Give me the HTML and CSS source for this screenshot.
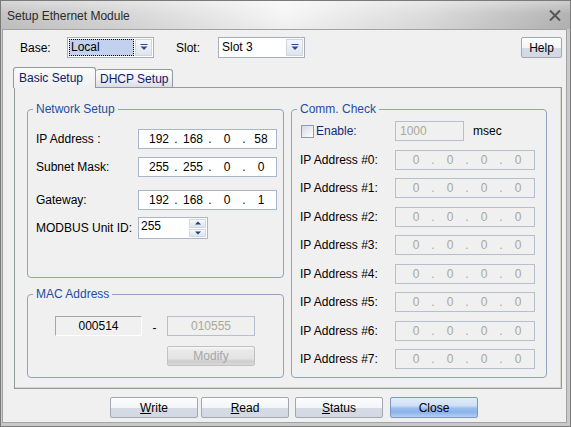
FILE: index.html
```html
<!DOCTYPE html>
<html>
<head>
<meta charset="utf-8">
<title>Setup Ethernet Module</title>
<link rel="stylesheet" href="styles.css">
</head>
<body>
<div class="window">
  <div class="titlebar">
    <span class="title">Setup Ethernet Module</span>
    <svg class="close" width="12" height="11" viewBox="0 0 12 11"><path d="M1 0.5 L11 10.5 M11 0.5 L1 10.5" stroke="#555" stroke-width="2" fill="none"/></svg>
  </div>
  <div class="client">
    <div class="toprow">
      <span class="lbl lbl-base">Base:</span>
      <div class="combo">
        <span class="combo-val sel">Local</span>
        <span class="drop"><svg width="8" height="7" viewBox="0 0 8 7"><rect x="0.5" y="0" width="7" height="1" fill="#2f4c8a"/><path d="M0.5 2.5 H7.5 L4 6 Z" fill="#2f4c8a"/></svg></span>
      </div>
      <span class="lbl lbl-slot">Slot:</span>
      <div class="combo">
        <span class="combo-val">Slot 3</span>
        <span class="drop"><svg width="8" height="7" viewBox="0 0 8 7"><rect x="0.5" y="0" width="7" height="1" fill="#2f4c8a"/><path d="M0.5 2.5 H7.5 L4 6 Z" fill="#2f4c8a"/></svg></span>
      </div>
      <button class="btn help">Help</button>
    </div>

    <div class="tabs">
      <div class="tab active">Basic Setup</div>
      <div class="tab inactive">DHCP Setup</div>
    </div>

    <div class="panel">
      <div class="col-left">
        <fieldset class="group net">
          <legend>Network Setup</legend>
          <div class="net-body">
            <div class="row"><span class="flabel">IP Address :</span>
              <div class="ipbox"><span class="seg">192</span><span class="dot">.</span><span class="seg">168</span><span class="dot">.</span><span class="seg">0</span><span class="dot">.</span><span class="seg">58</span></div>
            </div>
            <div class="row r-subnet"><span class="flabel">Subnet Mask:</span>
              <div class="ipbox"><span class="seg">255</span><span class="dot">.</span><span class="seg">255</span><span class="dot">.</span><span class="seg">0</span><span class="dot">.</span><span class="seg">0</span></div>
            </div>
            <div class="row r-gw"><span class="flabel">Gateway:</span>
              <div class="ipbox"><span class="seg">192</span><span class="dot">.</span><span class="seg">168</span><span class="dot">.</span><span class="seg">0</span><span class="dot">.</span><span class="seg">1</span></div>
            </div>
            <div class="row r-modbus"><span class="flabel">MODBUS Unit ID:</span>
              <div class="spin">
                <span class="spin-val">255</span>
                <span class="spin-btns">
                  <span class="spin-btn"><svg width="6" height="4" viewBox="0 0 6 4"><path d="M0 3.5 H6 L3 0.5 Z" fill="#1f3b7a"/></svg></span>
                  <span class="spin-btn"><svg width="6" height="4" viewBox="0 0 6 4"><path d="M0 0.5 H6 L3 3.5 Z" fill="#1f3b7a"/></svg></span>
                </span>
              </div>
            </div>
          </div>
        </fieldset>

        <fieldset class="group mac">
          <legend>MAC Address</legend>
          <div class="mac-grid">
            <div class="sunken">000514</div>
            <div class="dash">-</div>
            <div class="disbox">010555</div>
            <button class="modify" disabled>Modify</button>
          </div>
        </fieldset>
      </div>

      <fieldset class="group comm">
        <legend>Comm. Check</legend>
        <div class="comm-body">
          <div class="enable-row">
            <span class="chk-label"><span class="chk"></span><span class="enable">Enable:</span></span>
            <div class="in-1000">1000</div>
            <span class="msec">msec</span>
          </div>
          <div class="crow first"><span class="clabel">IP Address #0:</span><div class="ipbox dis"><span class="seg">0</span><span class="dot">.</span><span class="seg">0</span><span class="dot">.</span><span class="seg">0</span><span class="dot">.</span><span class="seg">0</span></div></div>
          <div class="crow"><span class="clabel">IP Address #1:</span><div class="ipbox dis"><span class="seg">0</span><span class="dot">.</span><span class="seg">0</span><span class="dot">.</span><span class="seg">0</span><span class="dot">.</span><span class="seg">0</span></div></div>
          <div class="crow"><span class="clabel">IP Address #2:</span><div class="ipbox dis"><span class="seg">0</span><span class="dot">.</span><span class="seg">0</span><span class="dot">.</span><span class="seg">0</span><span class="dot">.</span><span class="seg">0</span></div></div>
          <div class="crow"><span class="clabel">IP Address #3:</span><div class="ipbox dis"><span class="seg">0</span><span class="dot">.</span><span class="seg">0</span><span class="dot">.</span><span class="seg">0</span><span class="dot">.</span><span class="seg">0</span></div></div>
          <div class="crow"><span class="clabel">IP Address #4:</span><div class="ipbox dis"><span class="seg">0</span><span class="dot">.</span><span class="seg">0</span><span class="dot">.</span><span class="seg">0</span><span class="dot">.</span><span class="seg">0</span></div></div>
          <div class="crow"><span class="clabel">IP Address #5:</span><div class="ipbox dis"><span class="seg">0</span><span class="dot">.</span><span class="seg">0</span><span class="dot">.</span><span class="seg">0</span><span class="dot">.</span><span class="seg">0</span></div></div>
          <div class="crow"><span class="clabel">IP Address #6:</span><div class="ipbox dis"><span class="seg">0</span><span class="dot">.</span><span class="seg">0</span><span class="dot">.</span><span class="seg">0</span><span class="dot">.</span><span class="seg">0</span></div></div>
          <div class="crow"><span class="clabel">IP Address #7:</span><div class="ipbox dis"><span class="seg">0</span><span class="dot">.</span><span class="seg">0</span><span class="dot">.</span><span class="seg">0</span><span class="dot">.</span><span class="seg">0</span></div></div>
        </div>
      </fieldset>
    </div>

    <div class="buttons">
      <button class="btn b-write"><u>W</u>rite</button>
      <button class="btn b-read"><u>R</u>ead</button>
      <button class="btn b-status"><u>S</u>tatus</button>
      <button class="btn b-close">Close</button>
    </div>
  </div>
</div>
</body>
</html>
```

FILE: styles.css
```css
* { box-sizing: border-box; }
html, body { margin: 0; padding: 0; }
body {
  font-family: "Liberation Sans", Arial, sans-serif;
  font-size: 12px;
  color: #000;
  background: #ffffff;
}

.window {
  width: 571px;
  height: 427px;
  border: 1px solid #7a7a7a;
  background: #c9c9c9;
  display: flex;
  flex-direction: column;
}

.titlebar {
  height: 28px;
  flex: none;
  display: flex;
  align-items: center;
  justify-content: space-between;
  padding: 1px 9px 0 6px;
  background:
    linear-gradient(180deg, rgba(255,255,255,0.35) 0%, rgba(255,255,255,0) 45%, rgba(0,0,0,0.03) 100%),
    linear-gradient(90deg, #c3c3c3 0%, #dadada 25%, #f6f6f6 50%, #dcdcdc 75%, #b4b4b4 100%);
}
.title { color: #2a2a2a; font-size: 12px; }
.close { display: block; }

.client {
  flex: 1;
  margin: 0 3px 3px 1px;
  border: 1px solid #a3a3a3;
  background: #f0f0f0;
  display: flex;
  flex-direction: column;
}

/* top row */
.toprow {
  height: 28px;
  padding: 7px 4px 0 17px;
  display: flex;
  align-items: center;
}
.lbl { flex: none; }
.lbl-base { width: 47px; }
.lbl-slot { width: 42px; margin-left: 22px; }

.combo {
  width: 87px;
  height: 21px;
  flex: none;
  border: 1px solid #a7afbb;
  background: #fff;
  display: flex;
  padding: 1px;
}
.combo-val {
  flex: 1;
  padding: 0 2px;
  line-height: 17px;
}
.combo-val.sel {
  background: #c2d2ee;
  outline: 1px dotted #000;
  outline-offset: -1px;
  margin-right: 1px;
}
.drop {
  width: 17px;
  flex: none;
  display: flex;
  align-items: center;
  justify-content: center;
  background: linear-gradient(#f5f7fa, #dfe5ee);
  border: 1px solid #cfd6e0;
}

.btn {
  font-family: inherit;
  font-size: 12px;
  color: #000;
  height: 21px;
  padding: 0;
  border: 1px solid #a3a7ae;
  border-radius: 2px;
  background: linear-gradient(180deg, #fbfcfd 0%, #f3f5f8 52%, #d5dbe5 53%, #d2d9e4 100%);
  cursor: default;
}
.help { width: 41px; margin-left: auto; }

/* tabs */
.tabs {
  position: relative;
  z-index: 1;
  display: flex;
  align-items: flex-end;
  height: 20px;
  margin: 9px 0 0 11px;
}
.tab {
  color: #0c2168;
  border: 1px solid #919b9c;
  border-bottom: none;
  border-radius: 3px 3px 0 0;
}
.tab.active {
  width: 83px;
  height: 21px;
  margin-left: -1px;
  margin-bottom: -1px;
  padding: 3px 0 0 5px;
  background: linear-gradient(#fafafa, #f0f0f0);
}
.tab.inactive {
  width: 77px;
  height: 18px;
  border-left: none;
  padding: 2px 0 0 4px;
  background: linear-gradient(#ffffff 0%, #f1f1f5 50%, #dcdce8 100%);
}

/* panel */
.panel {
  margin-left: 11px;
  width: 548px;
  height: 302px;
  flex: none;
  border: 1px solid #919b9c;
  box-shadow: inset -1px -1px 0 #d6d6ce;
  background: #f0f0f0;
  display: flex;
  gap: 7px;
  padding: 14px 14px 0 12px;
}
.col-left {
  width: 257px;
  display: flex;
  flex-direction: column;
  gap: 9px;
}

.group {
  margin: 0;
  padding: 0;
  min-width: 0;
  border: 1px solid #8fa4c1;
  border-radius: 4px;
}
.group legend {
  margin-left: 5px;
  padding: 0 3px;
  line-height: 14px;
  color: #1d4ea2;
}
.net { height: 176px; }
.mac { height: 91px; }
.comm { width: 256px; height: 276px; }

/* network */
.net-body {
  padding: 13px 0 0 8px;
  display: flex;
  flex-direction: column;
}
.row { display: flex; align-items: center; }
.flabel { width: 102px; flex: none; }
.r-subnet { margin-top: 8px; }
.r-gw { margin-top: 13px; }
.r-modbus { margin-top: 7px; }

.ipbox {
  width: 139px;
  height: 20px;
  flex: none;
  border: 1px solid #a9b6c9;
  background: #fff;
  display: flex;
  align-items: center;
  padding-left: 7px;
}
.seg { width: 26px; text-align: center; }
.dot { width: 8px; text-align: center; }
.ipbox.dis {
  width: 140px;
  background: #f0f0f0;
  border-color: #b5bfcf;
  color: #a9a898;
}

.spin {
  width: 70px;
  height: 22px;
  border: 1px solid #a9b6c9;
  background: #fff;
  display: flex;
}
.spin-val { flex: 1; padding: 1px 0 0 2px; line-height: 14px; }
.spin-btns {
  width: 18px;
  flex: none;
  display: flex;
  flex-direction: column;
  padding: 1px 1px 1px 0;
  gap: 1px;
}
.spin-btn {
  flex: 1;
  display: flex;
  align-items: center;
  justify-content: center;
  background: linear-gradient(#f6f8fb, #dde3ec);
  border: 1px solid #d3d9e2;
}

/* mac */
.mac-grid {
  padding: 15px 0 0 27px;
  display: grid;
  grid-template-columns: 87px 25px 88px;
  grid-template-rows: 20px 20px;
  row-gap: 10px;
}
.sunken {
  border: 1px solid;
  border-color: #a6a6a6 #ffffff #ffffff #a6a6a6;
  background: #f0f0f0;
  text-align: center;
  line-height: 18px;
}
.dash { text-align: center; line-height: 20px; padding-top: 2px; }
.disbox {
  border: 1px solid #b5bfcf;
  background: #f0f0f0;
  color: #a9a898;
  text-align: center;
  line-height: 18px;
}
.modify {
  grid-column: 3;
  font-family: inherit;
  font-size: 12px;
  color: #a6a6a6;
  padding: 0;
  border: 1px solid #c2c2c2;
  border-radius: 2px;
  background: linear-gradient(180deg, #f7f7f7 0%, #e9e9e9 20%, #e3e3e3 65%, #cdcdcd 78%, #d9d9d9 100%);
}

/* comm check */
.comm-body {
  padding: 5px 0 0 8px;
  display: flex;
  flex-direction: column;
}
.enable-row { display: flex; align-items: center; height: 20px; }
.chk-label { width: 95px; flex: none; display: flex; align-items: center; }
.chk {
  width: 13px;
  height: 13px;
  margin-left: 1px;
  border: 1px solid #8b9bb4;
  background: linear-gradient(135deg, #d3d8e2 0%, #eef0f4 60%, #ffffff 100%);
}
.enable { margin-left: 2px; color: #102a76; }
.in-1000 {
  width: 69px;
  height: 20px;
  border: 1px solid #b5bfcf;
  background: #f0f0f0;
  color: #a9a898;
  padding-left: 4px;
  line-height: 18px;
}
.msec { margin-left: 9px; }

.crow { display: flex; align-items: center; height: 20px; margin-top: 8.43px; }
.crow.first { margin-top: 9px; }
.clabel { width: 95px; flex: none; }

/* bottom buttons */
.buttons {
  display: flex;
  margin-top: 8px;
  padding-left: 107px;
}
.buttons .btn { width: 88px; }
.b-read { margin-left: 3px; }
.b-status { margin-left: 6px; }
.b-close {
  margin-left: 7px;
  border-color: #7b98c2;
  background: linear-gradient(180deg, #e1ecfa 0%, #cfe0f6 40%, #98bced 55%, #8bb3ea 75%, #b6d0f3 100%);
}
```
